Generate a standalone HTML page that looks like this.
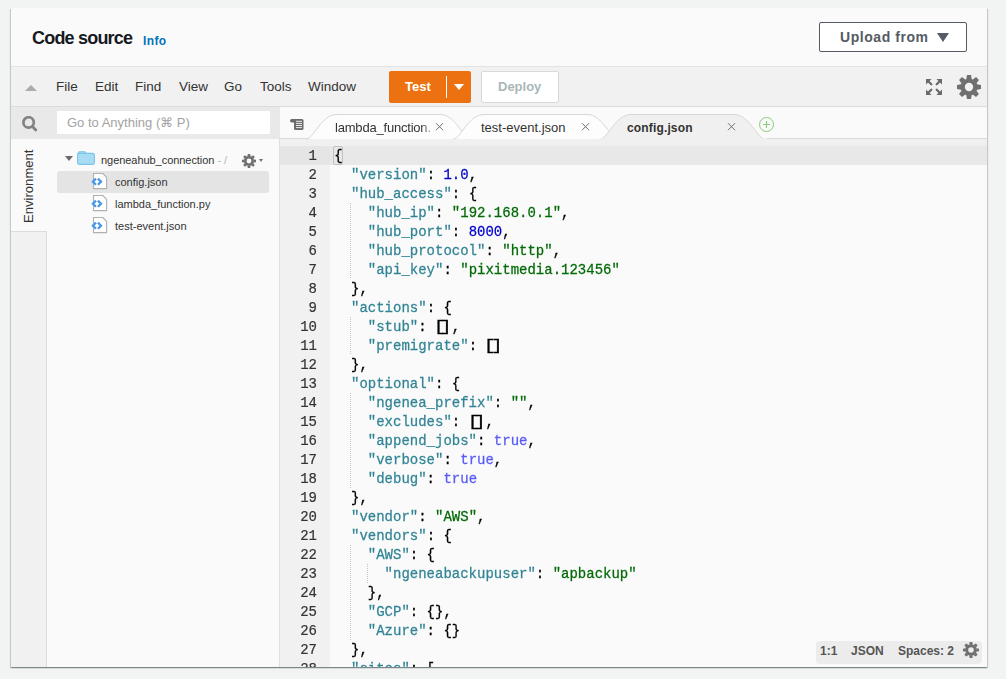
<!DOCTYPE html>
<html><head><meta charset="utf-8">
<style>
*{box-sizing:border-box;margin:0;padding:0}
html,body{width:1006px;height:679px;overflow:hidden;background:#f2f3f3;font-family:"Liberation Sans",sans-serif}
.abs{position:absolute}
#panel{position:absolute;left:11px;top:8px;width:976px;height:659px;background:#fafafa;box-shadow:0 1px 1px 0 rgba(0,28,36,.3),1px 1px 1px 0 rgba(0,28,36,.15),-1px 1px 1px 0 rgba(0,28,36,.15);overflow:hidden}
.title{left:21px;top:20px;font-size:18px;font-weight:bold;color:#16191f;letter-spacing:-0.8px;white-space:nowrap}
.info{left:132px;top:26px;font-size:12px;letter-spacing:0.4px;font-weight:bold;color:#0073bb}
.upload{left:808px;top:14px;width:148px;height:30px;border:1px solid #545b64;border-radius:2px;background:#fff;color:#545b64;font-weight:bold;font-size:14px;letter-spacing:0.55px}
.upload span{position:absolute;left:20px;top:6px;white-space:nowrap}
.upload i{position:absolute;left:117px;top:10px;width:0;height:0;border-left:6px solid transparent;border-right:6px solid transparent;border-top:9px solid #545b64}
#menubar{left:0;top:58px;width:976px;height:41px;background:#f1f1f1;border-top:1px solid #e3e3e3;border-bottom:1px solid #dcdcdc}
.mi{position:absolute;top:12px;font-size:13.5px;color:#333;white-space:nowrap}
.test{left:378px;top:4px;width:82px;height:32px;background:#ec7211;border-radius:2px;color:#fff;font-weight:bold;font-size:13px}
.deploy{left:470px;top:4px;width:78px;height:32px;background:#fff;border:1px solid #d5dbdb;border-radius:2px;color:#aab7b8;font-weight:bold;font-size:13px}
#search{left:0;top:99px;width:269px;height:32px;background:#e9e9e9}
.sinput{left:46px;top:4px;width:213px;height:23px;background:#fff;font-size:13px;color:#a3a3a3}
#lefttabs{left:0;top:131px;width:36px;height:540px;background:#f1f1f1;border-right:1px solid #dcdcdc}
.envtab{left:0;top:0;width:36px;height:93px;background:#fafafa;border-bottom:1px solid #dcdcdc}
#tree{left:36px;top:131px;width:233px;height:540px;background:#fafafa;border-right:1px solid #dedede}
.ti{position:absolute;font-size:11px;color:#333;white-space:nowrap}
#tabbar{left:269px;top:99px;width:707px;height:32px;background:#fafafa}
#strip{left:269px;top:130px;width:707px;height:8px;background:#f0f0f0;border-top:1px solid #dcdcdc}
#gutter{left:269px;top:138px;width:50px;height:540px;background:#f1f1f1}
#code{left:319px;top:138px;width:657px;height:540px;background:#fafafa}
.ln{position:absolute;left:0;width:50px;height:19px;padding-right:13px;text-align:right;font-family:"Liberation Mono",monospace;font-size:14px;line-height:19px;color:#333;transform:scaleY(1.1);transform-origin:0 3px;-webkit-text-stroke:0.2px}
.cl{position:absolute;left:4.2px;height:19px;font-family:"Liberation Mono",monospace;font-size:14px;line-height:19px;color:#000;white-space:pre;transform:scaleY(1.1);transform-origin:0 3px;-webkit-text-stroke:0.25px}
.ig{width:1px;background:repeating-linear-gradient(#c4c4c4 0 1px,transparent 1px 2px)}
.bo{display:inline-block;transform:translateX(0.4px) scaleX(1.4);transform-origin:50% 50%}.bc{display:inline-block;transform:translateX(-1.2px) scaleX(1.4);transform-origin:50% 50%}
.k{color:#318495}.s{color:#036a07}.n{color:#0000cd}.b{color:#585cf6}
#status{left:805px;top:633px;width:166px;height:23px;background:#ececec;border-radius:4px;font-size:12px;font-weight:bold;color:#555}
</style></head><body>
<div id="panel">
  <div class="abs title">Code source</div>
  <div class="abs info">Info</div>
  <div class="abs upload"><span>Upload from</span><i></i></div>

  <div id="menubar" class="abs">
    <div class="abs" style="left:14px;top:18px;width:0;height:0;border-left:6px solid transparent;border-right:6px solid transparent;border-bottom:6.5px solid #ababab"></div>
    <div class="mi" style="left:45px">File</div>
    <div class="mi" style="left:84px">Edit</div>
    <div class="mi" style="left:124px">Find</div>
    <div class="mi" style="left:168px">View</div>
    <div class="mi" style="left:213px">Go</div>
    <div class="mi" style="left:249px">Tools</div>
    <div class="mi" style="left:297px">Window</div>
    <div class="abs test"><span class="abs" style="left:16px;top:8px">Test</span><div class="abs" style="left:57px;top:5px;width:1px;height:22px;background:#fff"></div><div class="abs" style="left:65px;top:13px;width:0;height:0;border-left:5px solid transparent;border-right:5px solid transparent;border-top:6px solid #fff"></div></div>
    <div class="abs deploy"><span class="abs" style="left:16px;top:7px">Deploy</span></div>
    <svg class="abs" style="left:915px;top:12px" width="16" height="16" viewBox="0 0 16 16"><g><path d="M0 0H5.6L0 5.6Z" fill="#6b6b6b"/><path d="M2 2L5.3 5.3" stroke="#6b6b6b" stroke-width="2.3" stroke-linecap="round"/></g><g transform="translate(16 0) scale(-1 1)"><path d="M0 0H5.6L0 5.6Z" fill="#6b6b6b"/><path d="M2 2L5.3 5.3" stroke="#6b6b6b" stroke-width="2.3" stroke-linecap="round"/></g><g transform="translate(0 16) scale(1 -1)"><path d="M0 0H5.6L0 5.6Z" fill="#6b6b6b"/><path d="M2 2L5.3 5.3" stroke="#6b6b6b" stroke-width="2.3" stroke-linecap="round"/></g><g transform="translate(16 16) scale(-1 -1)"><path d="M0 0H5.6L0 5.6Z" fill="#6b6b6b"/><path d="M2 2L5.3 5.3" stroke="#6b6b6b" stroke-width="2.3" stroke-linecap="round"/></g></svg>
    <svg class="abs" style="left:946px;top:8px" width="24" height="24" viewBox="0 0 24 24"><g fill="#6f6f6f"><path d="M-2.7 -8 L-2 -12 L2 -12 L2.7 -8Z" transform="translate(12 12) rotate(0)"/><path d="M-2.7 -8 L-2 -12 L2 -12 L2.7 -8Z" transform="translate(12 12) rotate(45)"/><path d="M-2.7 -8 L-2 -12 L2 -12 L2.7 -8Z" transform="translate(12 12) rotate(90)"/><path d="M-2.7 -8 L-2 -12 L2 -12 L2.7 -8Z" transform="translate(12 12) rotate(135)"/><path d="M-2.7 -8 L-2 -12 L2 -12 L2.7 -8Z" transform="translate(12 12) rotate(180)"/><path d="M-2.7 -8 L-2 -12 L2 -12 L2.7 -8Z" transform="translate(12 12) rotate(225)"/><path d="M-2.7 -8 L-2 -12 L2 -12 L2.7 -8Z" transform="translate(12 12) rotate(270)"/><path d="M-2.7 -8 L-2 -12 L2 -12 L2.7 -8Z" transform="translate(12 12) rotate(315)"/><circle cx="12" cy="12" r="8.6"/></g><circle cx="12" cy="12" r="4.2" fill="#f1f1f1"/></svg>
  </div>

  <div id="search" class="abs">
    <svg class="abs" style="left:11px;top:9px" width="16" height="16" viewBox="0 0 16 16"><circle cx="6.6" cy="6.4" r="5.2" fill="none" stroke="#838383" stroke-width="2.7"/><path d="M10.2 10.2l3.6 3.8" stroke="#838383" stroke-width="2.8" stroke-linecap="round"/></svg>
    <div class="abs sinput"><span class="abs" style="left:10px;top:4px;white-space:nowrap">Go to Anything (⌘ P)</span></div>
  </div>

  <div id="lefttabs" class="abs">
    <div class="abs envtab"></div>
    <div class="abs" style="left:10px;top:83.5px;transform-origin:0 0;transform:rotate(-90deg);font-size:13.1px;color:#333;white-space:nowrap">Environment</div>
  </div>

  <div id="tree" class="abs">
    <div class="abs" style="left:10px;top:32px;width:212px;height:22px;background:#e4e4e4;border-radius:3px"></div>
    <div class="abs" style="left:18px;top:17px;width:0;height:0;border-left:4px solid transparent;border-right:4px solid transparent;border-top:5.5px solid #6a6a6a"></div>
    <svg class="abs" style="left:30px;top:12px" width="18" height="14" viewBox="0 0 18 14"><rect x="1" y="0.7" width="8" height="4" rx="1.5" fill="#a8dcf4" stroke="#7cc4e8" stroke-width="1"/><rect x="0.6" y="2.4" width="16.8" height="11" rx="1.6" fill="#a8dcf4" stroke="#7cc4e8" stroke-width="1.1"/></svg>
    <div class="ti" style="left:54px;top:15px;letter-spacing:-0.05px">ngeneahub_connection <span style="color:#b5b5b5">- /</span></div>
    <svg class="abs" style="left:195px;top:15px" width="14" height="14" viewBox="0 0 24 24"><g fill="#6f6f6f"><path d="M-2.7 -8 L-2 -12 L2 -12 L2.7 -8Z" transform="translate(12 12) rotate(0)"/><path d="M-2.7 -8 L-2 -12 L2 -12 L2.7 -8Z" transform="translate(12 12) rotate(45)"/><path d="M-2.7 -8 L-2 -12 L2 -12 L2.7 -8Z" transform="translate(12 12) rotate(90)"/><path d="M-2.7 -8 L-2 -12 L2 -12 L2.7 -8Z" transform="translate(12 12) rotate(135)"/><path d="M-2.7 -8 L-2 -12 L2 -12 L2.7 -8Z" transform="translate(12 12) rotate(180)"/><path d="M-2.7 -8 L-2 -12 L2 -12 L2.7 -8Z" transform="translate(12 12) rotate(225)"/><path d="M-2.7 -8 L-2 -12 L2 -12 L2.7 -8Z" transform="translate(12 12) rotate(270)"/><path d="M-2.7 -8 L-2 -12 L2 -12 L2.7 -8Z" transform="translate(12 12) rotate(315)"/><circle cx="12" cy="12" r="8.6"/></g><circle cx="12" cy="12" r="4.2" fill="#fafafa"/></svg>
    <div class="abs" style="left:212px;top:20px;width:0;height:0;border-left:2.5px solid transparent;border-right:2.5px solid transparent;border-top:3px solid #6f6f6f"></div>
    <!-- files -->
    <svg class="abs" style="left:44px;top:34px" width="17" height="17" viewBox="0 0 17 17"><path d="M2.5 0.5H11.8L15.6 4.3V15.6H2.5Z" fill="#fff" stroke="#b0b0b0" stroke-width="1.1" stroke-linejoin="round"/><path d="M5 5.6L1.9 8.7L5 11.8M6.9 5.6L10 8.7L6.9 11.8" fill="none" stroke="#4797e8" stroke-width="2.3"/></svg><svg class="abs" style="left:44px;top:56px" width="17" height="17" viewBox="0 0 17 17"><path d="M2.5 0.5H11.8L15.6 4.3V15.6H2.5Z" fill="#fff" stroke="#b0b0b0" stroke-width="1.1" stroke-linejoin="round"/><path d="M5 5.6L1.9 8.7L5 11.8M6.9 5.6L10 8.7L6.9 11.8" fill="none" stroke="#4797e8" stroke-width="2.3"/></svg><svg class="abs" style="left:44px;top:78px" width="17" height="17" viewBox="0 0 17 17"><path d="M2.5 0.5H11.8L15.6 4.3V15.6H2.5Z" fill="#fff" stroke="#b0b0b0" stroke-width="1.1" stroke-linejoin="round"/><path d="M5 5.6L1.9 8.7L5 11.8M6.9 5.6L10 8.7L6.9 11.8" fill="none" stroke="#4797e8" stroke-width="2.3"/></svg>
    <div class="ti" style="left:68px;top:37px">config.json</div>
    <div class="ti" style="left:68px;top:59px">lambda_function.py</div>
    <div class="ti" style="left:68px;top:81px">test-event.json</div>
  </div>

  <svg class="abs" style="left:269px;top:99px" width="707" height="40" viewBox="0 0 707 40"><rect x="0" y="0" width="707" height="32" fill="#fafafa"/><rect x="0" y="32" width="707" height="8" fill="#f0f0f0"/><path d="M0 31.5H707" stroke="#dadada" stroke-width="1"/><path d="M26 32 C34 32 41 7.5 57 7.5 L160 7.5 C176 7.5 183 32 191 32 Z" fill="#fdfdfd"/><path d="M26 32 C34 32 41 7.5 57 7.5 L160 7.5 C176 7.5 183 32 191 32" fill="none" stroke="#d2d2d2" stroke-width="0.9"/><path d="M173 32 C181 32 188 7.5 204 7.5 L307 7.5 C323 7.5 330 32 338 32 Z" fill="#fdfdfd"/><path d="M173 32 C181 32 188 7.5 204 7.5 L307 7.5 C323 7.5 330 32 338 32" fill="none" stroke="#d2d2d2" stroke-width="0.9"/><path d="M320 32 C328 32 335 7.5 351 7.5 L454 7.5 C470 7.5 477 32 485 32 Z" fill="#f0f0f0"/><path d="M320 32 C328 32 335 7.5 351 7.5 L454 7.5 C470 7.5 477 32 485 32" fill="none" stroke="#d2d2d2" stroke-width="0.9"/><rect x="319" y="31" width="168" height="2" fill="#f0f0f0"/><g fill="#6b6b6b"><rect x="10" y="12" width="8" height="3.6" rx="1.8"/><rect x="14" y="12" width="9.5" height="11" rx="1.6"/></g><g stroke="#fafafa" stroke-width="0.9"><path d="M16 14.3h6M16 16.4h6M16 18.5h6M16 20.6h6"/></g><path d="M156.0 16.2l7 7M163.0 16.2l-7 7" stroke="#6e6e6e" stroke-width="1"/><path d="M302.0 16.2l7 7M309.0 16.2l-7 7" stroke="#6e6e6e" stroke-width="1"/><path d="M448.0 16.2l7 7M455.0 16.2l-7 7" stroke="#6e6e6e" stroke-width="1"/><circle cx="486.5" cy="17.5" r="7" fill="none" stroke="#8acb7a" stroke-width="1"/><path d="M486.5 14v7M483 17.5h7" stroke="#8acb7a" stroke-width="1.1"/></svg><div class="abs" style="left:324px;top:112px;width:96px;overflow:hidden;font-size:13px;letter-spacing:-0.2px;color:#333;white-space:nowrap;-webkit-mask-image:linear-gradient(to right,#000 90%,rgba(0,0,0,.35))">lambda_function.py</div><div class="abs" style="left:470px;top:112px;font-size:13px;color:#333;white-space:nowrap">test-event.json</div><div class="abs" style="left:616px;top:113px;font-size:12px;letter-spacing:0.15px;font-weight:bold;color:#333;white-space:nowrap">config.json</div>
  <div id="gutter" class="abs">
<div class="abs" style="left:0;top:0;width:50px;height:19px;background:#e5e5e5"></div>
<div class="ln" style="top:0px">1</div>
<div class="ln" style="top:19px">2</div>
<div class="ln" style="top:38px">3</div>
<div class="ln" style="top:57px">4</div>
<div class="ln" style="top:76px">5</div>
<div class="ln" style="top:95px">6</div>
<div class="ln" style="top:114px">7</div>
<div class="ln" style="top:133px">8</div>
<div class="ln" style="top:152px">9</div>
<div class="ln" style="top:171px">10</div>
<div class="ln" style="top:190px">11</div>
<div class="ln" style="top:209px">12</div>
<div class="ln" style="top:228px">13</div>
<div class="ln" style="top:247px">14</div>
<div class="ln" style="top:266px">15</div>
<div class="ln" style="top:285px">16</div>
<div class="ln" style="top:304px">17</div>
<div class="ln" style="top:323px">18</div>
<div class="ln" style="top:342px">19</div>
<div class="ln" style="top:361px">20</div>
<div class="ln" style="top:380px">21</div>
<div class="ln" style="top:399px">22</div>
<div class="ln" style="top:418px">23</div>
<div class="ln" style="top:437px">24</div>
<div class="ln" style="top:456px">25</div>
<div class="ln" style="top:475px">26</div>
<div class="ln" style="top:494px">27</div>
<div class="ln" style="top:513px">28</div>
</div>
  <div id="code" class="abs">
<div class="abs" style="left:0;top:0;width:657px;height:19px;background:#e8e8e8"></div>
<div class="abs" style="left:3px;top:0;width:10px;height:19px;border:1px solid #c0c0c0;border-radius:2px"></div>
<div class="abs ig" style="left:20px;top:57px;height:76px"></div>
<div class="abs ig" style="left:20px;top:171px;height:38px"></div>
<div class="abs ig" style="left:20px;top:247px;height:95px"></div>
<div class="abs ig" style="left:20px;top:399px;height:95px"></div>
<div class="abs ig" style="left:37px;top:418px;height:19px"></div>
<div class="cl" style="top:0px">{</div>
<div class="cl" style="top:19px">  <span class="k">&quot;version&quot;</span>: <span class="n">1.0</span>,</div>
<div class="cl" style="top:38px">  <span class="k">&quot;hub_access&quot;</span>: {</div>
<div class="cl" style="top:57px">    <span class="k">&quot;hub_ip&quot;</span>: <span class="s">&quot;192.168.0.1&quot;</span>,</div>
<div class="cl" style="top:76px">    <span class="k">&quot;hub_port&quot;</span>: <span class="n">8000</span>,</div>
<div class="cl" style="top:95px">    <span class="k">&quot;hub_protocol&quot;</span>: <span class="s">&quot;http&quot;</span>,</div>
<div class="cl" style="top:114px">    <span class="k">&quot;api_key&quot;</span>: <span class="s">&quot;pixitmedia.123456&quot;</span></div>
<div class="cl" style="top:133px">  },</div>
<div class="cl" style="top:152px">  <span class="k">&quot;actions&quot;</span>: {</div>
<div class="cl" style="top:171px">    <span class="k">&quot;stub&quot;</span>: <span class="bo">[</span><span class="bc">]</span>,</div>
<div class="cl" style="top:190px">    <span class="k">&quot;premigrate&quot;</span>: <span class="bo">[</span><span class="bc">]</span></div>
<div class="cl" style="top:209px">  },</div>
<div class="cl" style="top:228px">  <span class="k">&quot;optional&quot;</span>: {</div>
<div class="cl" style="top:247px">    <span class="k">&quot;ngenea_prefix&quot;</span>: <span class="s">&quot;&quot;</span>,</div>
<div class="cl" style="top:266px">    <span class="k">&quot;excludes&quot;</span>: <span class="bo">[</span><span class="bc">]</span>,</div>
<div class="cl" style="top:285px">    <span class="k">&quot;append_jobs&quot;</span>: <span class="b">true</span>,</div>
<div class="cl" style="top:304px">    <span class="k">&quot;verbose&quot;</span>: <span class="b">true</span>,</div>
<div class="cl" style="top:323px">    <span class="k">&quot;debug&quot;</span>: <span class="b">true</span></div>
<div class="cl" style="top:342px">  },</div>
<div class="cl" style="top:361px">  <span class="k">&quot;vendor&quot;</span>: <span class="s">&quot;AWS&quot;</span>,</div>
<div class="cl" style="top:380px">  <span class="k">&quot;vendors&quot;</span>: {</div>
<div class="cl" style="top:399px">    <span class="k">&quot;AWS&quot;</span>: {</div>
<div class="cl" style="top:418px">      <span class="k">&quot;ngeneabackupuser&quot;</span>: <span class="s">&quot;apbackup&quot;</span></div>
<div class="cl" style="top:437px">    },</div>
<div class="cl" style="top:456px">    <span class="k">&quot;GCP&quot;</span>: {},</div>
<div class="cl" style="top:475px">    <span class="k">&quot;Azure&quot;</span>: {}</div>
<div class="cl" style="top:494px">  },</div>
<div class="cl" style="top:513px">  <span class="k">&quot;sites&quot;</span>: [</div>
</div>

  <div id="status" class="abs">
    <span class="abs" style="left:4px;top:3px">1:1</span>
    <span class="abs" style="left:35px;top:3px">JSON</span>
    <span class="abs" style="left:82px;top:3px">Spaces: 2</span>
    <svg class="abs" style="left:147px;top:1px" width="16" height="16" viewBox="0 0 24 24"><g fill="#6f6f6f"><path d="M-2.7 -8 L-2 -12 L2 -12 L2.7 -8Z" transform="translate(12 12) rotate(0)"/><path d="M-2.7 -8 L-2 -12 L2 -12 L2.7 -8Z" transform="translate(12 12) rotate(45)"/><path d="M-2.7 -8 L-2 -12 L2 -12 L2.7 -8Z" transform="translate(12 12) rotate(90)"/><path d="M-2.7 -8 L-2 -12 L2 -12 L2.7 -8Z" transform="translate(12 12) rotate(135)"/><path d="M-2.7 -8 L-2 -12 L2 -12 L2.7 -8Z" transform="translate(12 12) rotate(180)"/><path d="M-2.7 -8 L-2 -12 L2 -12 L2.7 -8Z" transform="translate(12 12) rotate(225)"/><path d="M-2.7 -8 L-2 -12 L2 -12 L2.7 -8Z" transform="translate(12 12) rotate(270)"/><path d="M-2.7 -8 L-2 -12 L2 -12 L2.7 -8Z" transform="translate(12 12) rotate(315)"/><circle cx="12" cy="12" r="8.6"/></g><circle cx="12" cy="12" r="4.2" fill="#ececec"/></svg>
  </div>
</div>
</body></html>
